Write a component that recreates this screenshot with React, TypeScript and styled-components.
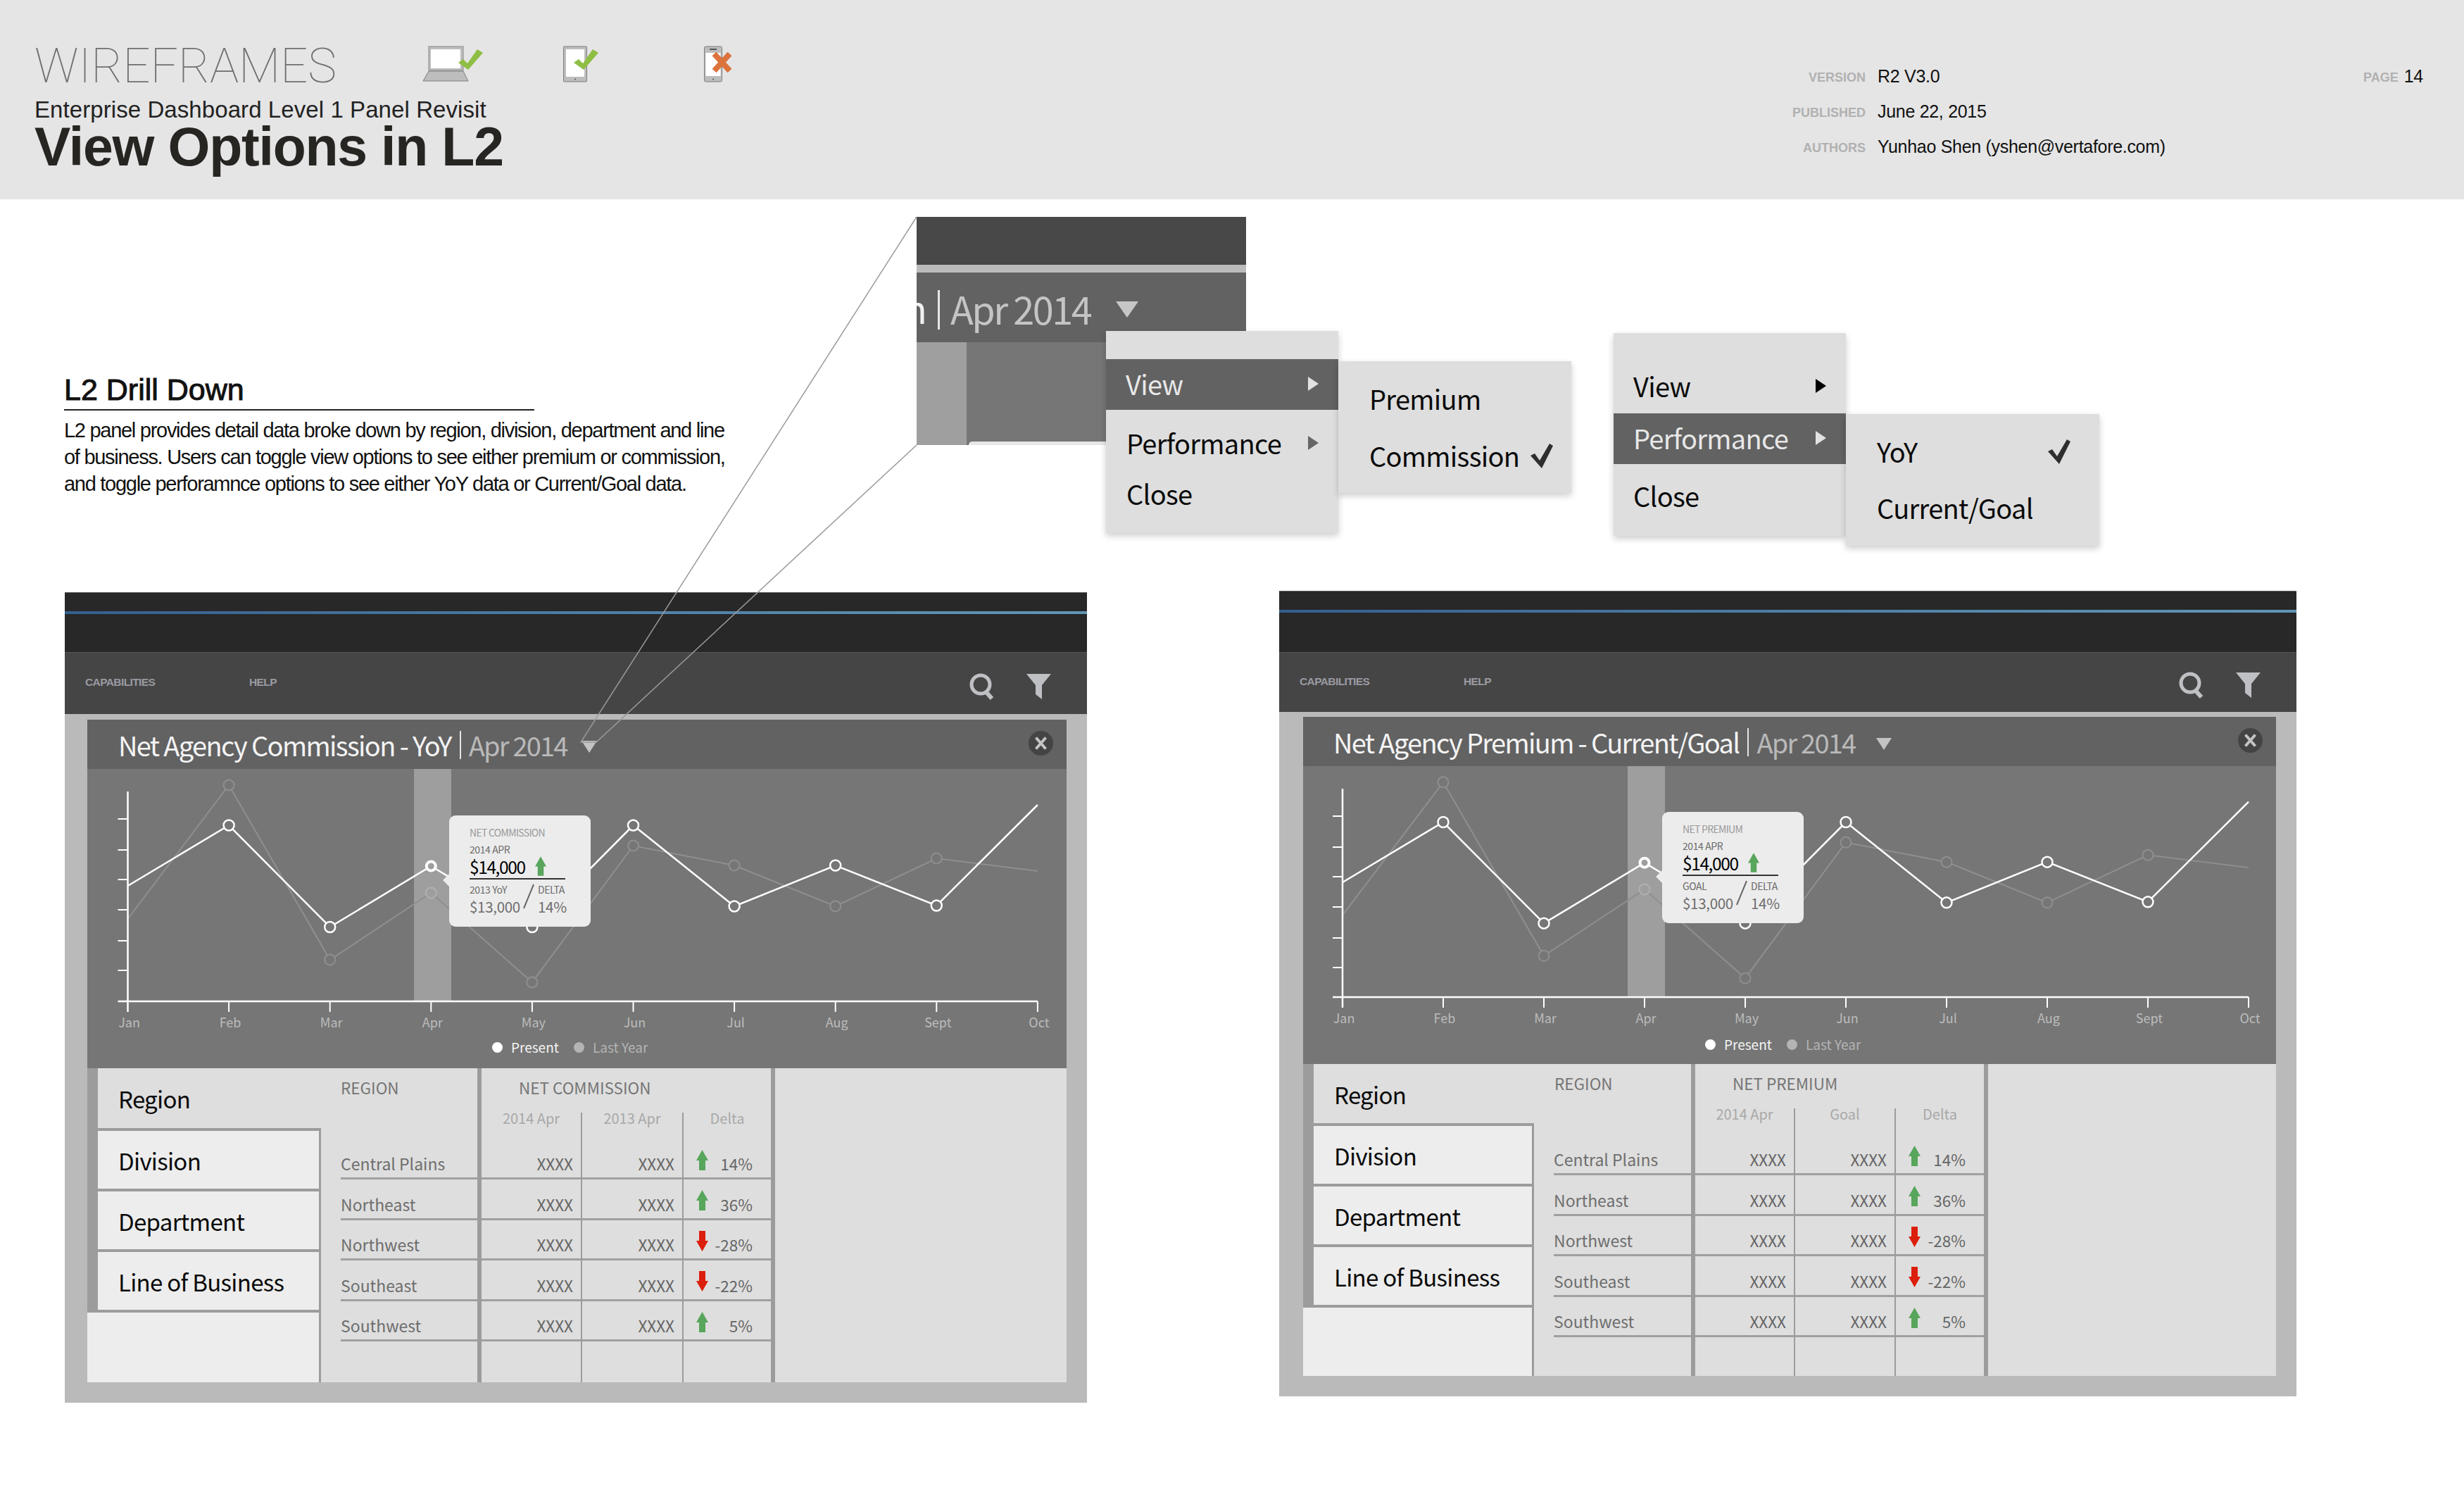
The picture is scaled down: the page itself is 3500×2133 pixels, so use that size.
import React from "react";
import styled, { createGlobalStyle } from "styled-components";

const SOURCE = `"Noto Sans CJK SC", "Noto Sans", sans-serif`;
const HELV = `"Liberation Sans", Arial, sans-serif`;
const RULE = "#9c9c9c";

const Global = createGlobalStyle`
  html, body { margin: 0; padding: 0; background: #fff; }
  * { box-sizing: border-box; }
`;

const Page = styled.div`
  position: relative;
  width: 3500px;
  height: 2133px;
  overflow: hidden;
  background: #fff;
  font-family: ${HELV};
`;

/* ---------- page header ---------- */
const Header = styled.header`
  display: flex;
  height: 283px;
  padding-left: 49px;
  background: #e5e5e5;
`;
const TitleBlock = styled.div`
  width: 2401px;
  padding-top: 54px;
`;
const TopRow = styled.div`
  display: grid;
  grid-template-columns: 551px 200px 200px 200px;
  height: 80px;
`;
const Wire = styled.div`
  font-family: Roboto, sans-serif;
  font-weight: 100;
  font-size: 69px;
  line-height: 80px;
  letter-spacing: -0.1px;
  color: #6f6f6f;
`;
const DeviceSlot = styled.div`
  padding-top: 11px;
`;
const Sub = styled.div`
  font-size: 33px;
  line-height: 36px;
  margin-top: 4px;
  letter-spacing: 0.08px;
  color: #222;
`;
const Main = styled.h1`
  margin: 0;
  font-size: 77px;
  line-height: 68px;
  font-weight: 700;
  letter-spacing: -1.2px;
  color: #262522;
`;
const Meta = styled.div`
  display: grid;
  grid-template-columns: 200px 690px;
  column-gap: 17px;
  align-content: start;
  padding-top: 90px;
  grid-auto-rows: 50px;
`;
const MetaLabel = styled.div`
  padding-top: 2px;
  font-size: 18px;
  font-weight: 700;
  line-height: 36px;
  text-align: right;
  color: #b1b1b1;
`;
const MetaValue = styled.div`
  font-size: 25px;
  line-height: 36px;
  letter-spacing: -0.3px;
  color: #111;
`;
const PageNo = styled.div`
  display: flex;
  gap: 8px;
  padding-top: 90px;
`;

/* ---------- notes + zoom detail ---------- */
const Upper = styled.section`
  display: flex;
  align-items: flex-start;
  height: 556px;
`;
const Notes = styled.div`
  width: 1302px;
  padding: 248px 0 0 91px;
`;
const NoteHead = styled.h2`
  margin: 0;
  width: 668px;
  height: 52px;
  border-bottom: 2px solid #222;
  font-size: 43px;
  line-height: 44px;
  font-weight: 400;
  color: #111;
  -webkit-text-stroke: 1px #111;
`;
const NoteBody = styled.p`
  margin: 9px 0 0;
  font-size: 29px;
  line-height: 38px;
  letter-spacing: -1.28px;
  color: #111;
  white-space: nowrap;
`;

const ZoomView = styled.div`
  position: relative;
  width: 468px;
  height: 324px;
  margin-top: 25px;
  font-family: ${SOURCE};
`;
const ZoomTop = styled.div`
  height: 68px;
  background: #484848;
`;
const ZoomStripe = styled.div`
  height: 11px;
  background: #bbb;
`;
const ZoomTitle = styled.div`
  display: flex;
  align-items: center;
  height: 99px;
  overflow: hidden;
  background: #626262;
`;
const ZoomClip = styled.span`
  margin-left: -18px;
  width: 26px;
  font-size: 54px;
  line-height: 60px;
  color: #f1f1f1;
`;
const ZoomBar = styled.i`
  width: 3px;
  height: 56px;
  margin: 6px 0 0 22px;
  background: #e6e6e6;
`;
const ZoomDate = styled.span`
  margin-left: 15px;
  padding-top: 3px;
  font-size: 54px;
  line-height: 60px;
  letter-spacing: -2.5px;
  color: #c4c4c4;
`;
const ZoomArrow = styled.i`
  width: 0;
  height: 0;
  margin: 6px 0 0 36px;
  border-left: 16px solid transparent;
  border-right: 16px solid transparent;
  border-top: 23px solid #c6c6c6;
`;
const ZoomChart = styled.div`
  display: flex;
  height: 146px;
  background: #767676;
`;
const ZoomBand = styled.div`
  width: 71px;
  background: #9f9f9f;
`;
const ZoomSliver = styled.div`
  align-self: flex-end;
  width: 200px;
  height: 5px;
  margin-left: 3px;
  border-top-left-radius: 5px;
  background: #e7e7e7;
`;

const MenuGroup = styled.div<{ $float?: boolean; $left?: number }>`
  display: flex;
  align-items: flex-start;
  font-family: ${SOURCE};
  ${(p) =>
    p.$float
      ? `position: absolute; left: 269px; top: 162px;`
      : `margin: 190px 0 0 ${p.$left}px;`}
`;
const Menu = styled.div<{ $w: number; $h: number; $mt?: number }>`
  display: flex;
  flex-direction: column;
  width: ${(p) => p.$w}px;
  height: ${(p) => p.$h}px;
  margin-top: ${(p) => p.$mt ?? 0}px;
  background: #dedede;
  box-shadow: 0 4px 9px rgba(0, 0, 0, 0.2);
`;
const MenuRow = styled.div<{ $active?: boolean; $h: number; $x: number; $pr?: number }>`
  display: flex;
  align-items: center;
  justify-content: space-between;
  height: ${(p) => p.$h}px;
  padding: 0 ${(p) => p.$pr ?? 28}px 2px ${(p) => p.$x}px;
  font-size: 38px;
  line-height: 50px;
  letter-spacing: -0.7px;
  color: ${(p) => (p.$active ? "#e8e8e8" : "#0a0a0a")};
  background: ${(p) => (p.$active ? "#626262" : "transparent")};
`;
const Caret = styled.i<{ $c: string }>`
  width: 0;
  height: 0;
  border-top: 10px solid transparent;
  border-bottom: 10px solid transparent;
  border-left: 15px solid ${(p) => p.$c};
`;

/* ---------- dashboard panels ---------- */
const PanelRow = styled.div`
  display: flex;
  align-items: flex-start;
  gap: 273px;
  padding-left: 92px;
  font-family: ${SOURCE};
`;
const Panel = styled.div<{ $w: number; $mt: number }>`
  width: ${(p) => p.$w}px;
  margin-top: ${(p) => p.$mt}px;
  background: #bababa;
`;
const AppBar = styled.div<{ $h: number }>`
  height: ${(p) => p.$h}px;
  padding-top: 26px;
  background: #282828;
  border-top: 1px solid #5a5a5a;
`;
const BlueLine = styled.div`
  height: 4px;
  background: linear-gradient(90deg, #33608f 0%, #4d7ea6 50%, #6196b6 100%);
`;
const NavBar = styled.nav<{ $h: number }>`
  display: flex;
  align-items: center;
  height: ${(p) => p.$h}px;
  padding-left: 29px;
  padding-right: 51px;
  background: #454545;
  border-top: 1px solid #555;
  font-family: ${HELV};
`;
const NavLink = styled.span<{ $w: number }>`
  width: ${(p) => p.$w}px;
  margin-top: -3px;
  font-size: 15.5px;
  font-weight: 700;
  letter-spacing: -0.6px;
  color: #9a9aa2;
`;
const NavTools = styled.div`
  display: flex;
  align-items: center;
  gap: 43px;
  margin-left: auto;
  padding-top: 8px;
`;
const Inner = styled.div<{ $pl: number; $pr: number; $pt: number; $pb: number }>`
  padding: ${(p) => `${p.$pt}px ${p.$pr}px ${p.$pb}px ${p.$pl}px`};
`;
const TitleBar = styled.div<{ $x: number }>`
  display: flex;
  align-items: center;
  height: 70px;
  padding: 2px 19px 0 ${(p) => p.$x}px;
  background: #626262;
`;
const TitleMain = styled.span`
  font-size: 38px;
  line-height: 50px;
  letter-spacing: -1.65px;
  color: #f4f4f4;
`;
const TitleBarLine = styled.i`
  width: 2px;
  height: 40px;
  margin: 0 11px 0 12px;
  background: #e4e4e4;
`;
const TitleDate = styled.span`
  font-size: 38px;
  line-height: 50px;
  letter-spacing: -1.8px;
  color: #b9b9b9;
`;
const TitleArrow = styled.i<{ $gap: number }>`
  width: 0;
  height: 0;
  margin: 4px 0 0 ${(p) => p.$gap}px;
  border-left: 11px solid transparent;
  border-right: 11px solid transparent;
  border-top: 17px solid #c3c3c3;
`;
const CloseSlot = styled.div`
  display: flex;
  margin-left: auto;
  margin-top: -6px;
`;
const ChartWrap = styled.div<{ $h: number }>`
  position: relative;
  height: ${(p) => p.$h}px;
  background: #767676;
`;
const ChartSvg = styled.svg`
  display: block;
`;
const Legend = styled.div<{ $x: number }>`
  display: flex;
  align-items: center;
  height: 28px;
  margin-top: 5px;
  padding-left: ${(p) => p.$x}px;
  font-size: 19px;
  line-height: 28px;
`;
const LegendDot = styled.i<{ $c: string }>`
  width: 15px;
  height: 15px;
  margin-right: 12px;
  border-radius: 50%;
  background: ${(p) => p.$c};
`;
const LegendText = styled.span<{ $c: string; $w: number }>`
  width: ${(p) => p.$w}px;
  color: ${(p) => p.$c};
`;

/* tooltip */
const Tip = styled.div<{ $x: number; $y: number }>`
  position: absolute;
  left: ${(p) => p.$x}px;
  top: ${(p) => p.$y}px;
  width: 201px;
  height: 158px;
  padding: 14px 0 0 29px;
  border-radius: 9px;
  background: #ececec;
  &::before {
    content: "";
    position: absolute;
    left: -6px;
    top: 85px;
    width: 14px;
    height: 14px;
    background: #ececec;
    transform: rotate(45deg);
  }
`;
const TipTitle = styled.div`
  font-size: 14px;
  line-height: 20px;
  letter-spacing: -0.7px;
  color: #9a9a9a;
`;
const TipLabel = styled.div<{ $mt?: number }>`
  margin-top: ${(p) => p.$mt ?? 0}px;
  font-size: 14px;
  line-height: 20px;
  letter-spacing: -0.4px;
  color: #6a6a6a;
`;
const TipValue = styled.div`
  display: flex;
  align-items: flex-start;
  gap: 14px;
  width: 136px;
  height: 33px;
  border-bottom: 2px solid #333;
  font-size: 24.5px;
  line-height: 30px;
  letter-spacing: -1.4px;
  color: #000;
`;
const TipCompare = styled.div`
  position: relative;
  display: grid;
  grid-template-columns: 97px 60px;
  margin-top: 4px;
`;
const TipFigure = styled.div`
  font-size: 20.5px;
  line-height: 26px;
  margin-top: 1px;
  letter-spacing: -0.3px;
  color: #6e6e6e;
`;
const TipSlash = styled.svg`
  position: absolute;
  left: 75px;
  top: 2px;
`;

/* table */
const TableArea = styled.div<{ $h: number; $cols: string }>`
  display: grid;
  grid-template-columns: ${(p) => p.$cols};
  height: ${(p) => p.$h}px;
  background: #dedede;
`;
const TabRail = styled.div`
  display: flex;
  flex-direction: column;
  background: ${RULE};
`;
const RailTab = styled.div<{ $first?: boolean; $h: number }>`
  display: flex;
  align-items: center;
  height: ${(p) => p.$h}px;
  margin-left: 15px;
  margin-top: ${(p) => (p.$first ? 0 : 4)}px;
  padding: 1px 0 0 29px;
  font-size: 33px;
  line-height: 44px;
  letter-spacing: -0.7px;
  color: #0a0a0a;
  background: ${(p) => (p.$first ? "#dedede" : "#ededed")};
  ${(p) => (p.$first ? "" : `border-right: 3px solid ${RULE};`)}
`;
const RailBlank = styled.div`
  flex: 1;
  margin-top: 4px;
  background: #ededed;
  border-right: 3px solid ${RULE};
`;
const RegionCol = styled.div`
  display: flex;
  flex-direction: column;
`;
const ColHead = styled.div<{ $pad: number; $h: number }>`
  height: ${(p) => p.$h}px;
  padding-left: ${(p) => p.$pad}px;
  font-size: 22.5px;
  line-height: 54px;
  color: #757575;
`;
const RegionRow = styled.div`
  display: flex;
  align-items: flex-end;
  height: 57.4px;
  margin-left: 28px;
  padding-bottom: 7px;
  border-bottom: 3px solid #a0a0a0;
  font-size: 23px;
  line-height: 26px;
  color: #6e6e6e;
`;
const MetricCol = styled.div`
  display: flex;
  flex-direction: column;
  border-left: 6px solid ${RULE};
  border-right: 6px solid ${RULE};
`;
const SubCols = styled.div`
  display: flex;
  flex: 1;
`;
const SubCol = styled.div<{ $w: number; $first?: boolean }>`
  width: ${(p) => p.$w}px;
  ${(p) => (p.$first ? "" : `border-left: 2px solid ${RULE};`)}
`;
const SubHead = styled.div`
  height: 38px;
  text-align: center;
  font-size: 20px;
  line-height: 16px;
  color: #a8a8a8;
`;
const Cell = styled.div`
  display: flex;
  align-items: flex-end;
  justify-content: flex-end;
  height: 57.4px;
  padding: 0 11px 7px 0;
  border-bottom: 3px solid #a0a0a0;
  font-size: 22.5px;
  line-height: 26px;
  color: #666;
`;
const DeltaCell = styled(Cell)`
  position: relative;
  padding-right: 26px;
`;
const DeltaIcon = styled.svg`
  position: absolute;
  left: 18px;
  top: 15px;
`;

/* ---------- drawings ---------- */
const Laptop = () => (
  <svg width="90" height="52" viewBox="0 0 90 52">
    <rect x="9" y="1" width="49" height="34" fill="#bdbdbd" stroke="#8a8a8a" />
    <rect x="12" y="5" width="42" height="27" fill="#fff" />
    <path d="M9 36H58L65 50H1Z" fill="#bdbdbd" stroke="#7c7c7c" />
    <path d="M51 24l7-5 6 6L78 5l8 5L65 34Z" fill="#8fbe44" />
  </svg>
);
const Tablet = () => (
  <svg width="56" height="52" viewBox="0 0 56 52">
    <rect x="0.5" y="1" width="33" height="50" rx="1" fill="#bdbdbd" stroke="#7d7d7d" />
    <rect x="4" y="5" width="26" height="39" fill="#fff" />
    <circle cx="17" cy="47.5" r="1" fill="#555" />
    <path d="M15 24l7-5 6 6L42 5l8 5L29 34Z" fill="#8fbe44" />
  </svg>
);
const Phone = () => (
  <svg width="44" height="52" viewBox="0 0 44 52">
    <rect x="0.5" y="1" width="25" height="50" rx="2" fill="#bdbdbd" stroke="#7d7d7d" />
    <rect x="2.5" y="10" width="21" height="33" fill="#fff" />
    <rect x="8" y="4" width="10" height="2" fill="#555" />
    <circle cx="13" cy="47.5" r="1" fill="#555" />
    <path d="M14.5 11.5L36.5 35.5M36.5 11.5L14.5 35.5" stroke="#dc733c" strokeWidth="8" />
  </svg>
);
const Check = ({ w, h }: { w: number; h: number }) => (
  <svg width={w} height={h} viewBox="0 0 32 35">
    <path d="M0 17l6-3 7 10L27 0l5 3-16 32Z" fill="#2e2e2e" />
  </svg>
);
const SearchIcon = () => (
  <svg width="38" height="38" viewBox="0 0 38 38">
    <circle cx="16" cy="16" r="13" fill="none" stroke="#bfc0c4" strokeWidth="5" />
    <path d="M23 26l9 10" stroke="#bfc0c4" strokeWidth="6" />
  </svg>
);
const FilterIcon = () => (
  <svg width="35" height="36" viewBox="0 0 35 36">
    <path d="M0 0H35L22 16V36L13 29V16Z" fill="#bfc0c4" />
  </svg>
);
const CloseIcon = () => (
  <svg width="35" height="35" viewBox="0 0 35 35">
    <circle cx="17.5" cy="17.5" r="17.5" fill="#444" />
    <path d="M10.5 9.5l14 16M24.5 9.5l-14 16" stroke="#c4c4c4" strokeWidth="4" />
  </svg>
);
const Arrow = ({ up, w = 17, h = 29 }: { up: boolean; w?: number; h?: number }) => (
  <svg width={w} height={h} viewBox="0 0 17 29">
    <path
      d={up ? "M8.5 0L17 15H13V29H4V15H0Z" : "M4 0H13V14H17L8.5 29L0 14H4Z"}
      fill={up ? "#58a55c" : "#dc1e0c"}
    />
  </svg>
);

/* ---------- data ---------- */
const MONTHS = ["Jan", "Feb", "Mar", "Apr", "May", "Jun", "Jul", "Aug", "Sept", "Oct"];
const PRESENT = [166, 80, 224.5, 138, 224.5, 80, 195, 137, 194, 51];
const LAST = [213, 23, 271, 176, 303, 109, 137, 195, 127, 145];
const TICKS = [71, 115, 157, 200, 244, 286];
const REGIONS = ["Central Plains", "Northeast", "Northwest", "Southeast", "Southwest"];
const DELTAS = [
  { v: "14%", up: true },
  { v: "36%", up: true },
  { v: "-28%", up: false },
  { v: "-22%", up: false },
  { v: "5%", up: true },
];

type PanelCfg = {
  w: number; mt: number; head: number; nav: number; gap: number; pl: number; pr: number;
  titleX: number; title: string; triGap: number; x0: number; dx: number; band: number;
  axis: number; chartH: number; tableH: number; pb: number; tipX: number; tipY: number;
  tipTitle: string; tipCompare: string; legendX: number; cols: string; region: number;
  sub: number[]; metricPad: number; metric: string; compare: string; tabH: number;
};

const PANELS: PanelCfg[] = [
  {
    w: 1452, mt: 2, head: 85, nav: 88, gap: 8, pl: 32, pr: 29, titleX: 44,
    title: "Net Agency Commission - YoY", triGap: 20, x0: 57.5, dx: 143.6, band: 464, axis: 330,
    chartH: 425, tableH: 446, pb: 29, tipX: 514, tipY: 66, tipTitle: "NET COMMISSION",
    tipCompare: "2013 YoY", legendX: 575, cols: "332px 222px 423px 1fr", region: 28,
    sub: [141, 144, 126], metricPad: 53, metric: "NET COMMISSION", compare: "2013 Apr", tabH: 85,
  },
  {
    w: 1445, mt: 0, head: 87, nav: 85, gap: 7, pl: 34, pr: 29, titleX: 43,
    title: "Net Agency Premium - Current/Goal", triGap: 30, x0: 56, dx: 143, band: 461, axis: 328,
    chartH: 423, tableH: 443, pb: 29, tipX: 510, tipY: 65, tipTitle: "NET PREMIUM",
    tipCompare: "GOAL", legendX: 571, cols: "328px 223px 422px 1fr", region: 29,
    sub: [140, 143, 127], metricPad: 53, metric: "NET PREMIUM", compare: "Goal", tabH: 84,
  },
];

const Chart = ({ c }: { c: PanelCfg }) => {
  const k = c.axis / 330;
  const x = (i: number) => c.x0 + i * c.dx;
  const pts = (s: number[]) => s.map((v, i) => `${x(i)},${v * k}`).join(" ");
  const iw = c.w - c.pl - c.pr;
  const right = x(9);
  return (
    <ChartSvg width={iw} height={376} viewBox={`0 0 ${iw} 376`}>
      <rect x={c.band} y="0" width="53" height={c.axis} fill="#9e9e9e" />
      <polyline points={pts(LAST)} fill="none" stroke="#8f8f8f" strokeWidth="2" />
      <polyline points={pts(PRESENT)} fill="none" stroke="#fff" strokeWidth="2.5" />
      {LAST.slice(1, 9).map((v, i) => (
        <circle
          key={i}
          cx={x(i + 1)}
          cy={v * k}
          r="7.5"
          fill={i === 2 ? "#9e9e9e" : "#767676"}
          stroke={i === 2 ? "#b0b0b0" : "#8f8f8f"}
          strokeWidth="2"
        />
      ))}
      {PRESENT.slice(1, 9).map((v, i) => (
        <circle
          key={i}
          cx={x(i + 1)}
          cy={v * k}
          r={i === 2 ? 6.5 : 7.5}
          fill={i === 2 ? "#9e9e9e" : "#767676"}
          stroke="#fff"
          strokeWidth={i === 2 ? 4 : 2.5}
        />
      ))}
      <path
        d={`M${c.x0} 32V${c.axis + 15}M${c.x0 - 14} ${c.axis}H${right}`}
        stroke="#fff"
        strokeWidth="2.5"
        fill="none"
      />
      {TICKS.map((t) => (
        <path key={t} d={`M${c.x0 - 14} ${t}H${c.x0}`} stroke="#fff" strokeWidth="2" />
      ))}
      {MONTHS.map((m, i) => (
        <g key={m}>
          {i > 0 && <path d={`M${x(i)} ${c.axis}V${c.axis + 15}`} stroke="#fff" strokeWidth="2" />}
          <text
            x={x(i) + 2}
            y={c.axis + 37}
            textAnchor="middle"
            fontFamily={SOURCE}
            fontSize="18"
            fill="#bcbcbc"
          >
            {m}
          </text>
        </g>
      ))}
    </ChartSvg>
  );
};

const DashPanel = ({ c }: { c: PanelCfg }) => (
  <Panel $w={c.w} $mt={c.mt}>
    <AppBar $h={c.head}>
      <BlueLine />
    </AppBar>
    <NavBar $h={c.nav}>
      <NavLink $w={233}>CAPABILITIES</NavLink>
      <NavLink $w={60}>HELP</NavLink>
      <NavTools>
        <SearchIcon />
        <FilterIcon />
      </NavTools>
    </NavBar>
    <Inner $pl={c.pl} $pr={c.pr} $pt={c.gap} $pb={c.pb}>
      <TitleBar $x={c.titleX}>
        <TitleMain>{c.title}</TitleMain>
        <TitleBarLine />
        <TitleDate>Apr 2014</TitleDate>
        <TitleArrow $gap={c.triGap} />
        <CloseSlot>
          <CloseIcon />
        </CloseSlot>
      </TitleBar>
      <ChartWrap $h={c.chartH}>
        <Chart c={c} />
        <Legend $x={c.legendX}>
          <LegendDot $c="#fff" />
          <LegendText $c="#f4f4f4" $w={89}>Present</LegendText>
          <LegendDot $c="#b4b4b4" />
          <LegendText $c="#b4b4b4" $w={120}>Last Year</LegendText>
        </Legend>
        <Tip $x={c.tipX} $y={c.tipY}>
          <TipTitle>{c.tipTitle}</TipTitle>
          <TipLabel $mt={4}>2014 APR</TipLabel>
          <TipValue>
            $14,000
            <Arrow up={true} w={16} h={28} />
          </TipValue>
          <TipCompare>
            <TipLabel>{c.tipCompare}</TipLabel>
            <TipLabel>DELTA</TipLabel>
            <TipFigure>$13,000</TipFigure>
            <TipFigure>14%</TipFigure>
            <TipSlash width="18" height="36" viewBox="0 0 18 36">
              <path d="M16 1L2 35" stroke="#666" strokeWidth="2" />
            </TipSlash>
          </TipCompare>
        </Tip>
      </ChartWrap>
      <TableArea $h={c.tableH} $cols={c.cols}>
        <TabRail>
          <RailTab $first $h={c.tabH}>Region</RailTab>
          <RailTab $h={82}>Division</RailTab>
          <RailTab $h={82}>Department</RailTab>
          <RailTab $h={82}>Line of Business</RailTab>
          <RailBlank />
        </TabRail>
        <RegionCol>
          <ColHead $pad={c.region} $h={101}>REGION</ColHead>
          {REGIONS.map((r) => (
            <RegionRow key={r}>{r}</RegionRow>
          ))}
        </RegionCol>
        <MetricCol>
          <ColHead $pad={c.metricPad} $h={63}>{c.metric}</ColHead>
          <SubCols>
            <SubCol $w={c.sub[0]} $first>
              <SubHead>2014 Apr</SubHead>
              {REGIONS.map((r) => (
                <Cell key={r}>XXXX</Cell>
              ))}
            </SubCol>
            <SubCol $w={c.sub[1]}>
              <SubHead>{c.compare}</SubHead>
              {REGIONS.map((r) => (
                <Cell key={r}>XXXX</Cell>
              ))}
            </SubCol>
            <SubCol $w={c.sub[2]}>
              <SubHead>Delta</SubHead>
              {DELTAS.map((d) => (
                <DeltaCell key={d.v}>
                  <DeltaIcon width="17" height="29" viewBox="0 0 17 29">
                    <path
                      d={d.up ? "M8.5 0L17 15H13V29H4V15H0Z" : "M4 0H13V14H17L8.5 29L0 14H4Z"}
                      fill={d.up ? "#58a55c" : "#dc1e0c"}
                    />
                  </DeltaIcon>
                  {d.v}
                </DeltaCell>
              ))}
            </SubCol>
          </SubCols>
        </MetricCol>
      </TableArea>
    </Inner>
  </Panel>
);

const Callout = styled.svg`
  position: absolute;
  left: 0;
  top: 0;
  pointer-events: none;
`;

export default function App() {
  return (
    <Page>
      <Global />
      <Header>
        <TitleBlock>
          <TopRow>
            <Wire>WIREFRAMES</Wire>
            <DeviceSlot><Laptop /></DeviceSlot>
            <DeviceSlot><Tablet /></DeviceSlot>
            <DeviceSlot><Phone /></DeviceSlot>
          </TopRow>
          <Sub>Enterprise Dashboard Level 1 Panel Revisit</Sub>
          <Main>View Options in L2</Main>
        </TitleBlock>
        <Meta>
          <MetaLabel>VERSION</MetaLabel>
          <MetaValue>R2 V3.0</MetaValue>
          <MetaLabel>PUBLISHED</MetaLabel>
          <MetaValue>June 22, 2015</MetaValue>
          <MetaLabel>AUTHORS</MetaLabel>
          <MetaValue>Yunhao Shen (yshen@vertafore.com)</MetaValue>
        </Meta>
        <PageNo>
          <MetaLabel>PAGE</MetaLabel>
          <MetaValue>14</MetaValue>
        </PageNo>
      </Header>

      <Upper>
        <Notes>
          <NoteHead>L2 Drill Down</NoteHead>
          <NoteBody>
            L2 panel provides detail data broke down by region, division, department and line
            <br />
            of business. Users can toggle view options to see either premium or commission,
            <br />
            and toggle perforamnce options to see either YoY data or Current/Goal data.
          </NoteBody>
        </Notes>
        <ZoomView>
          <ZoomTop />
          <ZoomStripe />
          <ZoomTitle>
            <ZoomClip>n</ZoomClip>
            <ZoomBar />
            <ZoomDate>Apr 2014</ZoomDate>
            <ZoomArrow />
          </ZoomTitle>
          <ZoomChart>
            <ZoomBand />
            <ZoomSliver />
          </ZoomChart>
          <MenuGroup $float>
            <Menu $w={330} $h={287}>
              <MenuRow $h={40} $x={28} />
              <MenuRow $active $h={72} $x={28}>
                View
                <Caret $c="#e2e2e2" />
              </MenuRow>
              <MenuRow $h={96} $x={29}>
                Performance
                <Caret $c="#666" />
              </MenuRow>
              <MenuRow $h={48} $x={29}>Close</MenuRow>
            </Menu>
            <Menu $w={331} $h={187} $mt={43}>
              <MenuRow $h={14} $x={44} />
              <MenuRow $h={80} $x={44}>Premium</MenuRow>
              <MenuRow $h={82} $x={44} $pr={26}>
                Commission
                <Check w={32} h={35} />
              </MenuRow>
            </Menu>
          </MenuGroup>
        </ZoomView>
        <MenuGroup $left={522}>
          <Menu $w={330} $h={288}>
            <MenuRow $h={38} $x={28} />
            <MenuRow $h={76} $x={28}>
              View
              <Caret $c="#000" />
            </MenuRow>
            <MenuRow $active $h={72} $x={28}>
              Performance
              <Caret $c="#e2e2e2" />
            </MenuRow>
            <MenuRow $h={92} $x={28}>Close</MenuRow>
          </Menu>
          <Menu $w={360} $h={187} $mt={115}>
            <MenuRow $h={14} $x={44} />
            <MenuRow $h={80} $x={44} $pr={41}>
              YoY
              <Check w={32} h={35} />
            </MenuRow>
            <MenuRow $h={80} $x={44}>Current/Goal</MenuRow>
          </Menu>
        </MenuGroup>
      </Upper>

      <PanelRow>
        {PANELS.map((c) => (
          <DashPanel key={c.title} c={c} />
        ))}
      </PanelRow>

      <Callout width="3500" height="2133" viewBox="0 0 3500 2133">
        <path d="M1302 308L825 1054H847L1302 632" fill="none" stroke="#9a9a9a" strokeWidth="1.5" />
      </Callout>
    </Page>
  );
}
